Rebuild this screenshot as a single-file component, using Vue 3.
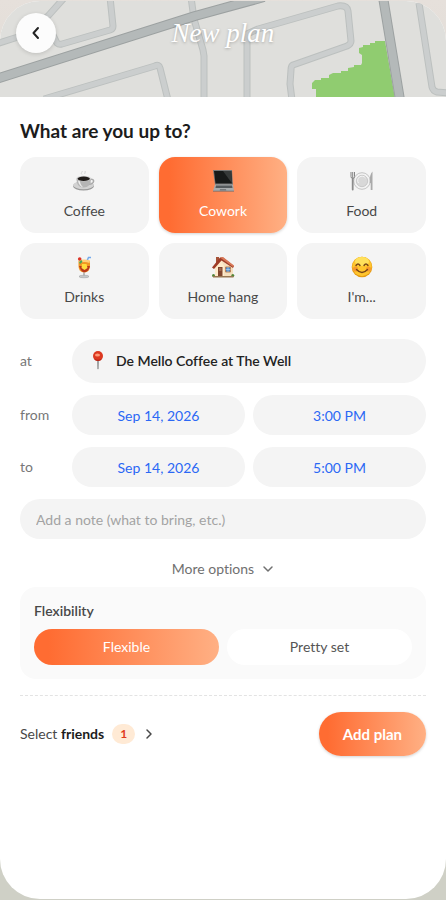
<template>
  <div class="page">
    <main class="sheet">
      <header class="top">
        <svg class="map" viewBox="0 0 446 96" preserveAspectRatio="xMidYMid slice" aria-hidden="true">
          <rect width="446" height="96" fill="#dfdfdc" />
          <path fill="#90cc70" d="M316 97V88H312V82L315 79H321V77H329V74L333 72H341V70H348V67L354 66V64H361L362 62V54L359 52V47L363 46V44H370V42H375V40H385L395 97Z" />
          <g class="edge">
            <path v-for="r in roads" :key="r" :d="r" />
          </g>
          <g class="road">
            <path v-for="r in roads" :key="r" :d="r" />
          </g>
          <g class="edge big">
            <path v-for="r in mainRoads" :key="r" :d="r" />
          </g>
          <g class="road big">
            <path v-for="r in mainRoads" :key="r" :d="r" />
          </g>
        </svg>
        <button class="back" type="button" aria-label="Back">
          <svg width="16" height="16" viewBox="0 0 16 16"><path d="M10 3 5.500 8l4.500 5" /></svg>
        </button>
        <h1>New plan</h1>
      </header>

      <form class="form" @submit.prevent>
        <h2>What are you up to?</h2>

        <div class="tiles">
          <button
            v-for="item in activities"
            :key="item.id"
            type="button"
            class="tile"
            :class="{ active: activity === item.id }"
            :aria-pressed="activity === item.id"
            @click="activity = item.id"
          >
            <svg class="emoji" viewBox="0 0 24 24" aria-hidden="true">
              <g v-if="item.id === 'coffee'">
                <ellipse cx="11.5" cy="17" rx="10.5" ry="4.5" fill="#999" />
                <ellipse cx="11.5" cy="16.2" rx="10.2" ry="4" fill="#d2d2d2" />
                <path d="M18 10.5c5-1.500 5 4.500-1.500 5" fill="none" stroke="#aaa" stroke-width="1.600" />
                <path d="M4.500 9.500c0 6 2.500 9 7 9s7.500-3 7.500-9z" fill="#b5b5b5" />
                <path d="M6 12c1 4 3 6 5 6.300-2-2-3-4-3-6z" fill="#eee" />
                <ellipse cx="11.700" cy="9.500" rx="7.200" ry="2.700" fill="#d5d5d5" />
                <ellipse cx="11.700" cy="9.700" rx="6.200" ry="2.200" fill="#201c1a" />
                <path d="M10 5.500c-2-2 1-2 0-3.500M13 5c-1-1 1-1.500 0-3" fill="none" stroke="#d2d2d2" />
              </g>
              <g v-else-if="item.id === 'cowork'">
                <path d="M2 1h19l1 15H4z" fill="#777" />
                <path d="M3 2h17.300l.8 12.500H4.500z" fill="#171919" />
                <path d="M12 2h8.300l.8 12.500z" fill="#363939" />
                <path d="M4 15.500h18L23 22H2z" fill="#a8abad" />
                <path d="M5 16.500h16l.5 2.500h-17z" fill="#555a5d" />
                <path d="M9 20h6l.3 1.500H8.700z" fill="#777b7e" />
                <path d="M2 21.700h21v.8H2z" fill="#65696c" />
              </g>
              <g v-else-if="item.id === 'food'">
                <circle cx="12" cy="12" r="8.300" fill="#f2f2f2" stroke="#b8b8b8" stroke-width=".8" />
                <circle cx="12" cy="12" r="5.700" fill="#d8d8d8" stroke="#bcbcbc" stroke-width=".7" />
                <path d="M8.500 14a4.300 4.300 0 0 1 7-5" fill="none" stroke="#f5f5f5" />
                <path d="M1 3v4.500q0 2 1.700 2T4.500 7.500V3M2.700 3v7" fill="none" stroke="#858585" stroke-width="1" />
                <path d="M2.700 10v10.500" stroke="#8b8b8b" stroke-width="1.800" stroke-linecap="round" />
                <path d="M22.500 2.500v18.500h-1.800v-7h-.9q-.3-9 2.700-11.500z" fill="#aaa" />
              </g>
              <g v-else-if="item.id === 'drinks'">
                <path d="m14.500 7 2-4.500h2.500" fill="none" stroke="#72a9ec" stroke-width="1.500" />
                <path d="M6.500 6q5.500-2 11.500 0v5q0 5.500-5 6.500h-1.500q-5-1-5-6.500z" fill="#f19622" />
                <path d="M7 11q2 5.500 5 6.500 5-1 6-6.500z" fill="#b9371b" />
                <path d="M10 9h4.500l1 4-3 2-3-2z" fill="#ffdc3d" />
                <path d="M6.500 5.500q5.500-2 11.500 0l-.5 2.500q-5-2-10.500 0z" fill="#ffcf78" />
                <circle cx="7.700" cy="4" r="1.800" fill="#dd3427" />
                <path d="m7 7 2.500-2 1 2-2.500 2z" fill="#4aa554" />
                <path d="M12 17.500v3.500" stroke="#aaa" stroke-width="1.500" />
                <ellipse cx="12" cy="21.500" rx="5" ry="1.300" fill="#c5c9cb" stroke="#999" stroke-width=".5" />
              </g>
              <g v-else-if="item.id === 'home'">
                <path d="M5 2h3v7H5z" fill="#a65237" />
                <path d="m4 12 6-8 12 7v10.500H4z" fill="#f5dfbe" />
                <path d="m4 12 6-7 3 6v10.500H4z" fill="#ffebcb" />
                <path d="m1 12.500 8-10h3l11 8.500-1 2-11.500-7.500-7.500 8.500z" fill="#9f3c28" />
                <path d="m9 2.500 3-.5 11 8.500-1 1.500z" fill="#d87857" />
                <path d="M7 12h4.500v9.500H7z" fill="#81462f" />
                <path d="M8 13h2.500v3H8z" fill="#a3684c" />
                <path d="M14.500 12h5v5h-5z" fill="#4b86c6" stroke="#b9835b" />
                <path d="M17 12v5M14.500 14.500h5" stroke="#b6dcf6" stroke-width=".6" />
                <circle cx="2.500" cy="20.500" r="1.500" fill="#548739" />
                <circle cx="21.800" cy="20.500" r="1.500" fill="#548739" />
                <path d="M2 21h20.500v1.500H2z" fill="#987651" />
              </g>
              <g v-else>
                <circle cx="12" cy="12" r="10.300" fill="#e49a12" />
                <circle cx="12" cy="11.500" r="9.700" fill="#ffc52c" />
                <ellipse cx="12" cy="6.500" rx="7" ry="4.500" fill="#ffe05b" />
                <circle cx="5.500" cy="14" r="2.600" fill="#f79a2d" />
                <circle cx="18.500" cy="14" r="2.600" fill="#f79a2d" />
                <path d="M6 10.500q2-3 4 0M14 10.500q2-3 4 0M6.500 14.500q5.500 6 11 0" fill="none" stroke="#784415" stroke-width="1.400" stroke-linecap="round" />
              </g>
            </svg>
            <span>{{ item.label }}</span>
          </button>
        </div>

        <div class="fields">
          <div class="row">
            <label for="place">at</label>
            <div class="place">
              <svg width="20" height="20" viewBox="0 0 20 20" aria-hidden="true">
                <path d="M9.200 9h1.600l-.2 8.500-.6 1-.6-1z" fill="#858585" />
                <circle cx="10" cy="5" r="5" fill="#dc3820" />
                <path d="M6 7.500q4 2.500 8 0-1 2.500-4 2.500T6 7.500z" fill="#b72416" />
                <ellipse cx="9.500" cy="4" rx="2.500" ry="1.500" fill="#ff9b78" />
              </svg>
              <input id="place" v-model="place" type="text" />
            </div>
          </div>
          <div class="row">
            <label for="fromDate">from</label>
            <input id="fromDate" v-model="fromDate" class="when" type="text" />
            <input v-model="fromTime" class="when" type="text" aria-label="from time" />
          </div>
          <div class="row">
            <label for="toDate">to</label>
            <input id="toDate" v-model="toDate" class="when" type="text" />
            <input v-model="toTime" class="when" type="text" aria-label="to time" />
          </div>
          <input v-model="note" class="note" type="text" placeholder="Add a note (what to bring, etc.)" aria-label="Note" />
        </div>

        <button class="more" type="button" @click="showOptions = !showOptions">
          More options
          <svg width="12" height="12" viewBox="0 0 12 12"><path d="m2 4 4 4 4-4" /></svg>
        </button>

        <section v-if="showOptions" class="panel">
          <h3>Flexibility</h3>
          <div class="choices">
            <button
              v-for="f in ['Flexible', 'Pretty set']"
              :key="f"
              type="button"
              :class="{ active: flexibility === f }"
              :aria-pressed="flexibility === f"
              @click="flexibility = f"
            >{{ f }}</button>
          </div>
        </section>

        <footer class="bottom">
          <button class="friends" type="button">
            <span>Select <b>friends</b></span>
            <span class="count">1</span>
            <svg width="12" height="12" viewBox="0 0 12 12"><path d="m4 2 4 4-4 4" /></svg>
          </button>
          <button class="submit" type="submit">Add plan</button>
        </footer>
      </form>
    </main>
  </div>
</template>

<script setup>
import { ref } from "vue";

const activities = [
  { id: "coffee", label: "Coffee" },
  { id: "cowork", label: "Cowork" },
  { id: "food", label: "Food" },
  { id: "drinks", label: "Drinks" },
  { id: "home", label: "Home hang" },
  { id: "custom", label: "I'm..." },
];

// side streets of the header map
const roads = [
  "M-4 43L18 36L48 15L65 -4",
  "M50 28L57 42Q59 44 62 43L110 29Q113 28 113 25L110 -4",
  "M44 98L155 65Q159 63 160 67L168 99",
  "M191 -4L194 18L203 49L204 55V99",
  "M247 99V33L258 28L338 5Q347 4 348 10L351 40Q351 43 347 45L293 64Q291 65 291 69L290 83L292 99",
  "M419 2L432 86Q433 90 437 91L450 92",
];
const mainRoads = ["M-4 78L195 15L264 -4", "M383 -4L400 99"];

const activity = ref("cowork");
const place = ref("De Mello Coffee at The Well");
const fromDate = ref("Sep 14, 2026");
const fromTime = ref("3:00 PM");
const toDate = ref("Sep 14, 2026");
const toTime = ref("5:00 PM");
const note = ref("");
const showOptions = ref(true);
const flexibility = ref("Flexible");
</script>

<style>
body {
  background: #cfd0c6;
}
</style>

<style scoped>
* {
  box-sizing: border-box;
}
.page {
  display: flex;
  flex-direction: column;
  min-height: 100vh;
  padding: 1px 0;
  background: linear-gradient(#e6e0db, #cfd0c6 50%);
  color: #484848;
  font-family: Lato, "Open Sans", sans-serif;
  font-size: 14px;
  line-height: 20px;
  font-variant-ligatures: none;
}
button,
input {
  font: inherit;
  font-variant-ligatures: none;
  color: inherit;
  border: 0;
  margin: 0;
  padding: 0;
  background: none;
}
button {
  cursor: pointer;
}
.sheet {
  flex: 1;
  background: #fff;
  border-radius: 40px;
  overflow: hidden;
}

/* header */
.top {
  position: relative;
  display: grid;
  grid-template-columns: 40px 1fr 40px;
  align-items: center;
  padding: 12px 16px 44px;
}
.map {
  position: absolute;
  top: 0;
  left: 0;
  width: 100%;
  height: 100%;
}
.map g {
  fill: none;
  stroke-linejoin: round;
}
.edge {
  stroke: #bcc0bf;
  stroke-width: 7px;
}
.road {
  stroke: #cbcece;
  stroke-width: 5px;
}
.edge.big {
  stroke: #9ca1a1;
  stroke-width: 10px;
}
.road.big {
  stroke: #b4b9b9;
  stroke-width: 8px;
}
.back {
  position: relative;
  display: flex;
  align-items: center;
  justify-content: center;
  width: 40px;
  height: 40px;
  border-radius: 50%;
  background: #fcfcfc;
  box-shadow: 0 1px 4px rgba(0, 0, 0, 0.15);
}
.back path,
.more path,
.friends path {
  fill: none;
  stroke: currentColor;
  stroke-width: 1.5px;
  stroke-linecap: round;
  stroke-linejoin: round;
}
.back path {
  stroke: #222;
  stroke-width: 2px;
}
h1 {
  position: relative;
  margin: 0;
  text-align: center;
  color: #fff;
  font-family: "Liberation Serif", serif;
  font-style: italic;
  font-weight: 400;
  font-size: 27px;
  line-height: 32px;
  text-shadow: 0 1px 3px rgba(0, 0, 0, 0.25);
}

.form {
  padding: 20px;
}
h2 {
  margin: 0 0 12px;
  color: #1c1c1c;
  font-size: 19px;
  line-height: 28px;
}
.tiles {
  display: grid;
  grid-template-columns: repeat(3, 1fr);
  gap: 10px;
}
.tile {
  display: flex;
  flex-direction: column;
  align-items: center;
  gap: 8px;
  padding: 12px 4px;
  border-radius: 16px;
  background: #f4f4f4;
}
.emoji {
  width: 24px;
  height: 24px;
}
.active,
.submit {
  background: linear-gradient(90deg, #ff6c32 8%, #ffb084) !important;
  color: #fff !important;
}
.tile.active,
.submit {
  box-shadow: 0 1px 3px rgba(0, 0, 0, 0.18);
}

/* place and time */
.fields {
  display: flex;
  flex-direction: column;
  gap: 12px;
  margin-top: 20px;
}
.row {
  display: flex;
  align-items: center;
  gap: 8px;
}
.row label {
  width: 44px;
  flex: none;
  color: #777;
}
.place {
  flex: 1;
  display: flex;
  align-items: center;
  gap: 8px;
  height: 44px;
  padding: 0 16px;
  border-radius: 22px;
  background: #f4f4f4;
}
.place input {
  flex: 1;
  min-width: 0;
  color: #222;
  font-weight: 600;
}
.when {
  flex: 1;
  min-width: 0;
  height: 40px;
  border-radius: 20px;
  background: #f4f4f4;
  color: #2b68f5;
  text-align: center;
}
.note {
  width: 100%;
  height: 40px;
  padding: 0 16px;
  border-radius: 20px;
  background: #f4f4f4;
}
.note::placeholder {
  color: #a3a3a3;
  opacity: 1;
}

.more {
  display: flex;
  align-items: center;
  gap: 8px;
  margin: 20px auto 8px;
  color: #707070;
}
.panel {
  padding: 14px;
  border-radius: 16px;
  background: #fafafa;
}
h3 {
  margin: 0 0 8px;
  font-size: 14px;
  font-weight: 600;
  line-height: 20px;
}
.choices {
  display: flex;
  gap: 8px;
}
.choices button {
  flex: 1;
  height: 36px;
  border-radius: 18px;
  background: #fff;
  color: #555;
}

.bottom {
  display: flex;
  justify-content: space-between;
  align-items: center;
  margin-top: 16px;
  padding-top: 16px;
  border-top: 1px dashed #e3e3e3;
}
.friends {
  display: flex;
  align-items: center;
  gap: 8px;
}
.friends b {
  color: #1c1c1c;
}
.count {
  padding: 0 8px;
  border-radius: 10px;
  background: #ffead5;
  color: #e03a1c;
  font-size: 12px;
  font-weight: 700;
}
.submit {
  height: 44px;
  padding: 0 24px;
  border-radius: 22px;
  font-size: 15px;
  font-weight: 700;
}
</style>
